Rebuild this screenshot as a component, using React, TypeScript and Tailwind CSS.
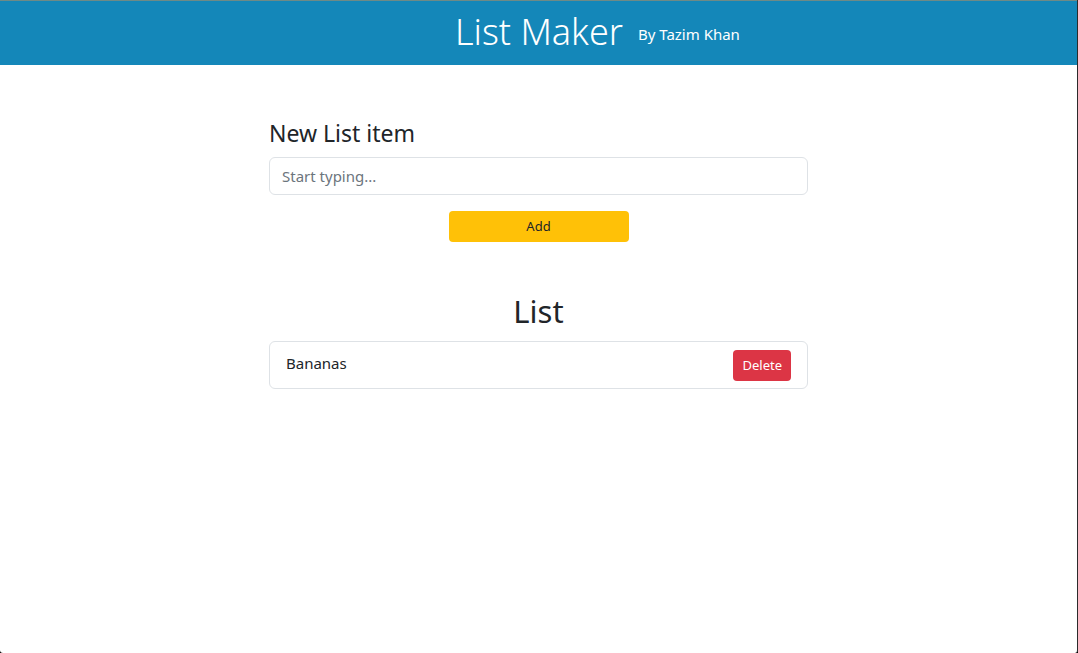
import { useState } from "react"

const font = { fontFamily: '"Segoe UI", "Noto Sans", "Open Sans", sans-serif' }

export default function App() {
  const [items, setItems] = useState<string[]>(["Bananas"])
  const [text, setText] = useState("")

  const add = () => {
    if (!text.trim()) return
    setItems([...items, text.trim()])
    setText("")
  }

  return (
    <div className="bg-black">
      <div
        className="h-[653px] w-full flex flex-col bg-white text-[#212529] border-r border-[#2b2b2b] overflow-hidden rounded-b-[3px]"
        style={font}
      >
        {/* Header */}
        <div className="h-[65px] flex-shrink-0 bg-[#1487b9] border-t border-[#6f8a86] flex items-center pl-[455px]">
          <h1 className="text-[36px] font-light text-white leading-none flex items-center mt-[-2px]">
            List Maker
            <span className="text-[15px] font-normal ml-[15px] mt-[5px]">By Tazim Khan</span>
          </h1>
        </div>

        {/* Main */}
        <div className="w-[539px] mx-auto pt-[53px]">
          <h2 className="text-[23px] leading-[30px] mb-[9px]">New List item</h2>
          <input
            value={text}
            onChange={e => setText(e.target.value)}
            placeholder="Start typing..."
            className="w-full h-[38px] px-3 text-[15px] border border-[#dee2e6] rounded-[6px] outline-none placeholder:text-[#6c757d]"
          />
          <div className="flex justify-center mt-[16px]">
            <button
              onClick={add}
              className="w-[180px] h-[31px] bg-[#ffc107] rounded-[4px] text-[13px] text-[#212529]"
            >
              Add
            </button>
          </div>

          <h2 className="text-[31px] leading-[40px] text-center mt-[49px] mb-[10px]">List</h2>
          <div className="flex flex-col gap-2">
            {items.map((item, i) => (
              <div
                key={i}
                className="h-[48px] border border-[#dee2e6] rounded-[6px] flex items-start justify-between pl-[16px] pr-[16px]"
              >
                <span className="text-[15px] mt-[10px]">{item}</span>
                <button
                  onClick={() => setItems(items.filter((_, j) => j !== i))}
                  className="mt-[8px] h-[31px] px-[9px] bg-[#dc3545] text-white text-[13px] rounded-[4px]"
                >
                  Delete
                </button>
              </div>
            ))}
          </div>
        </div>
      </div>
    </div>
  )
}
